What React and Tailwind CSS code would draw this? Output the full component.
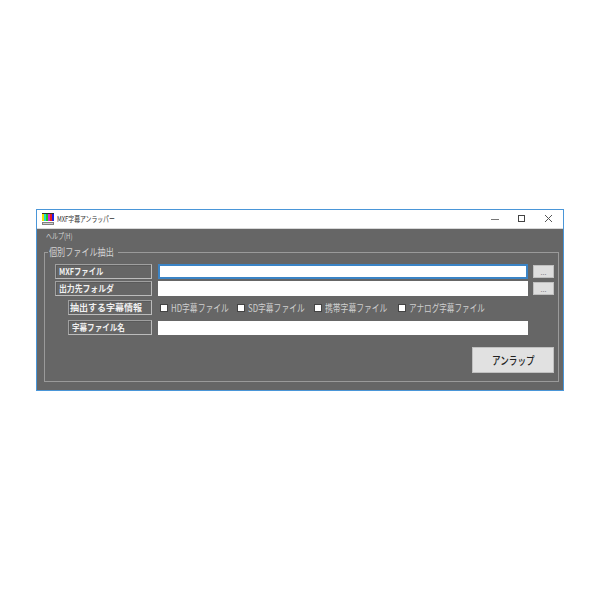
const jp = { fontFamily: '"Noto Sans CJK JP","Liberation Sans",sans-serif' };

function Label({ children, wide, textClass, h = "h-[15px]" }) {
  return (
    <div className={`${wide ? "w-[97px]" : "ml-[13px] w-[84px]"} ${h} shrink-0 border border-[#a0a0a0] border-r-[#bcbcbc] border-b-[#bcbcbc] flex items-center overflow-hidden shadow-[inset_1px_1px_0_#5a5a5a]`}>
      <span className={`${textClass} origin-left text-[9px] font-bold text-[#f0f0f0] leading-none whitespace-nowrap`}>{children}</span>
    </div>
  );
}

function Browse() {
  return (
    <div className="ml-[5px] w-[21px] h-[13px] bg-[#dedede] border border-[#c0c0c0] flex items-end justify-center text-[7px] leading-[9px] text-[#777777]">...</div>
  );
}

function Check({ children, w, textClass }) {
  return (
    <div className={`flex items-center ${w}`}>
      <div className="w-[8px] h-[8px] bg-white border border-[#444444] shrink-0" />
      <span className={`ml-[3px] ${textClass} origin-left text-[10px] leading-none text-[#cfcfcf] whitespace-nowrap`}>{children}</span>
    </div>
  );
}

export default function App() {
  return (
    <div className="w-[600px] h-[600px] bg-white pt-[209px] pl-[36px]" style={jp}>
      <div className="w-[528px] h-[182px] border border-[#4a96d8] bg-[#666666] flex flex-col">
        <div className="h-[19px] shrink-0 bg-white flex items-center pl-[5px] border-b border-[#d8d8d8]">
          <svg width="12" height="12" viewBox="0 0 12 12" className="shrink-0">
            <rect x="0" y="0" width="12" height="1" fill="#303030" />
            <rect x="0" y="1" width="2" height="7" fill="#f0e000" />
            <rect x="2" y="1" width="2" height="7" fill="#20d8d0" />
            <rect x="4" y="1" width="2" height="7" fill="#20c820" />
            <rect x="6" y="1" width="2" height="7" fill="#e020d0" />
            <rect x="8" y="1" width="2" height="7" fill="#e82020" />
            <rect x="10" y="1" width="2" height="7" fill="#2020e0" />
            <rect x="0" y="9" width="12" height="3" fill="#808080" />
            <rect x="1" y="10" width="10" height="1" fill="#d0d0d0" />
          </svg>
          <span className="ml-[3px] origin-left scale-x-[0.73] text-[8px] leading-none text-[#333333] whitespace-nowrap">MXF字幕アンラッパー</span>
          <div className="ml-auto flex items-center">
            <svg width="10" height="10" viewBox="0 0 10 10"><path d="M0 5.5H8" stroke="#777777" strokeWidth="1" /></svg>
            <svg width="10" height="10" viewBox="0 0 10 10" className="ml-[16px]"><rect x="1.5" y="1.5" width="6" height="6" fill="none" stroke="#444444" /></svg>
            <svg width="10" height="10" viewBox="0 0 10 10" className="ml-[17px] mr-[9px]"><path d="M1 1L8 8M8 1L1 8" stroke="#555555" strokeWidth="1" /></svg>
          </div>
        </div>
        <div className="h-[14px] shrink-0 pl-[9px] flex items-center">
          <span className="origin-left scale-x-[0.75] text-[8px] leading-none text-[#d4d4d4] whitespace-nowrap">ヘルプ(H)</span>
        </div>
        <div className="relative ml-[7px] mt-[9px] w-[515px] h-[130px] border border-[#9a9a9a] pt-[11px] pl-[10px]">
          <div className="absolute left-[3px] top-[-7px] w-[70px] bg-[#666666] px-[1px] text-[10px] leading-[12px] text-[#d4d4d4] whitespace-nowrap">
            <span className="inline-block origin-left scale-x-[0.81]">個別ファイル抽出</span>
          </div>
          <div className="flex items-center">
            <Label wide textClass="ml-[3px] scale-x-[0.81]">MXFファイル</Label>
            <div className="ml-[6px] w-[370px] h-[15px] bg-white border-2 border-[#3b84c6]" />
            <Browse />
          </div>
          <div className="flex items-center mt-[2px]">
            <Label wide textClass="ml-[3px] scale-x-[0.87]">出力先フォルダ</Label>
            <div className="ml-[6px] w-[370px] h-[15px] bg-white" />
            <Browse />
          </div>
          <div className="flex items-center mt-[4px]">
            <Label textClass="ml-[1px]">抽出する字幕情報</Label>
            <div className="ml-[8px] flex items-center">
              <Check w="w-[77px]" textClass="scale-x-[0.78]">HD字幕ファイル</Check>
              <Check w="w-[77px]" textClass="scale-x-[0.78]">SD字幕ファイル</Check>
              <Check w="w-[84px]" textClass="scale-x-[0.78]">携帯字幕ファイル</Check>
              <Check w="w-[90px]" textClass="scale-x-[0.76]">アナログ字幕ファイル</Check>
            </div>
          </div>
          <div className="flex items-center mt-[5px]">
            <Label textClass="ml-[3px] scale-x-[0.84]">字幕ファイル名</Label>
            <div className="ml-[6px] w-[370px] h-[14px] bg-white" />
          </div>
          <div className="flex justify-end mt-[12px] pr-[4px]">
            <div className="w-[82px] h-[26px] bg-[#e1e1e1] border border-[#c0c0c0] flex items-center justify-center">
              <span className="scale-x-[0.78] text-[11px] font-medium leading-none text-[#222222] whitespace-nowrap">アンラップ</span>
            </div>
          </div>
        </div>
      </div>
    </div>
  );
}
